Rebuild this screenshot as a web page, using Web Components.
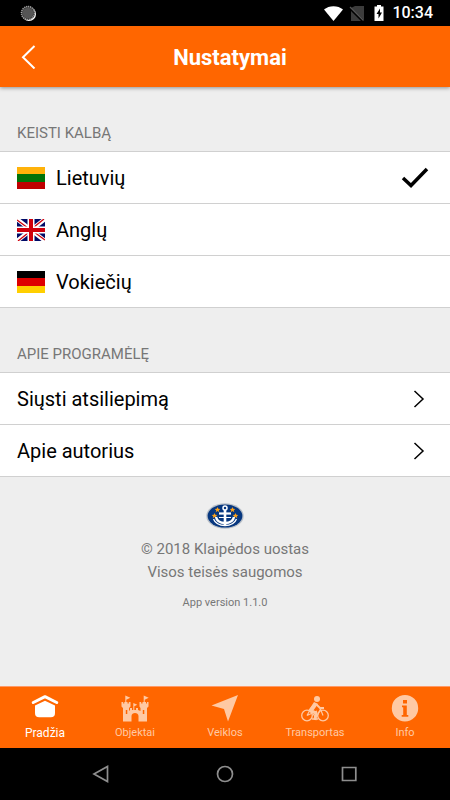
<!DOCTYPE html>
<html lang="lt">
<head>
<meta charset="utf-8">
<meta name="viewport" content="width=device-width, initial-scale=1">
<title>Nustatymai</title>
<style>
html, body { margin: 0; height: 100%; }
body { font-family: Roboto, "Noto Sans", sans-serif; color: #000; --brand: #ff6600; --ground: #eee; --line: #d0d0d0; }
</style>
</head>
<body>
<settings-screen></settings-screen>
<script>
const define = (name, html, init) => customElements.define(name, class extends HTMLElement {
  constructor() {
    super();
    const t = document.createElement('template');
    t.innerHTML = html;
    this.attachShadow({ mode: 'open' }).append(t.content.cloneNode(true));
  }
  connectedCallback() { if (init) init(this, this.shadowRoot); }
});

define('status-bar', `
<style>
:host { display: flex; align-items: center; height: 26px; padding: 0 17px 0 20px; background: #000; color: #fff; font-size: 16px; line-height: 28px; font-weight: 500; }
.right { margin-left: auto; display: flex; align-items: center; }
.time { margin-left: 6px; }
svg { display: block; }
</style>
<svg width="17" height="17" viewBox="0 0 17 17" aria-hidden="true">
  <circle cx="9" cy="9" r="7" fill="#fff"/><circle cx="8" cy="8" r="7" fill="#3a3a3a"/>
  <circle cx="8" cy="8" r="6.5" fill="none" stroke="#aaa" stroke-width="1.6" stroke-dasharray="1 1"/><circle cx="8" cy="8" r="5.3" fill="#555"/>
</svg>
<div class="right">
<svg width="62" height="18" viewBox="0 0 62 18" aria-hidden="true">
  <path d="M0 5.5C5 1 14 1 19 5.5L9.500 17Z" fill="#fff"/>
  <path d="M31 2h9v14l-13-12z M27 7l10 10h-10z" fill="#3c3c3c"/><path d="M26 3l13.500 13.500" stroke="#555" stroke-width="1.300"/>
  <path d="M53 1h4v1.500h2.500V17h-9V2.500H53z" fill="#fff"/><path d="M56 4.500l-3.500 5.500h2v4.500l3.500-6h-2z" fill="#000"/>
</svg>
<span class="time"><slot></slot></span>
</div>`);

define('app-header', `
<style>
:host { position: relative; z-index: 1; display: grid; grid-template-columns: 56px 1fr 46px; align-items: center; height: 61px; background: var(--brand); color: #fff; box-shadow: 0 1px 4px rgba(0,0,0,.4); }
h1 { margin: 0; padding-top: 2px; text-align: center; font-size: 22px; line-height: 28px; font-weight: 700; }
button { height: 61px; border: 0; padding: 0 0 0 21px; background: none; color: inherit; }
svg { display: block; }
</style>
<button type="button" aria-label="Atgal"><svg width="15" height="24" viewBox="0 0 15 24" fill="none" stroke="currentColor" stroke-width="2"><path d="M13.500 1L2 12.300L13.500 23.500"/></svg></button>
<h1><slot></slot></h1>`);

define('settings-section', `
<style>
:host { display: block; }
h2 { margin: 0; padding: 36px 17px 7px; font-size: 15px; line-height: 21px; font-weight: 400; color: #777; }
.list { background: #fff; border-top: 1px solid var(--line); }
</style>
<section><h2><slot name="title"></slot></h2><div class="list"><slot></slot></div></section>`);

define('flag-icon', `
<style>:host { display: block; width: 28px; height: 22px; } svg { display: block; }</style>
<svg width="28" height="22" viewBox="0 0 28 22" aria-hidden="true"></svg>`, (el, root) => {
  const stripes = (a, b, c) => `<path fill="${a}" d="M0 0h28v8H0z"/><path fill="${b}" d="M0 7h28v8H0z"/><path fill="${c}" d="M0 15h28v7H0z"/>`;
  root.querySelector('svg').innerHTML = {
    lt: stripes('#ffb20a', '#007308', '#bf0000'),
    de: stripes('#000', '#de0000', '#ffcf00'),
    gb: `<path fill="#000b67" d="M0 0h28v22H0z"/><path d="M0 0l28 22M28 0L0 22" stroke="#fff" stroke-width="4.200"/><path d="M0 1l11 8M28 21l-11-8M27 0L17 8M1 22l10-8" stroke="#d0000c" stroke-width="1.300"/><path d="M14 0v22M0 11h28" stroke="#fff" stroke-width="7"/><path d="M14 0v22M0 11h28" stroke="#d0000c" stroke-width="4"/>`
  }[el.getAttribute('country')];
});

define('language-picker', `
<style>
:host { display: block; }
label { display: flex; align-items: center; gap: 11px; box-sizing: border-box; height: 52px; padding: 0 21px 0 17px; border-bottom: 1px solid var(--line); font-size: 20px; line-height: 28px; }
input { appearance: none; width: 0; height: 0; margin: 0; order: 3; }
.check { display: none; margin-left: auto; order: 4; }
input:checked + .check { display: block; }
</style>
<label><flag-icon country="lt"></flag-icon>Lietuvių<input type="radio" name="lang" checked><svg class="check" width="28" height="22" viewBox="0 0 28 22" fill="none" stroke="#000" stroke-width="3.500" aria-hidden="true"><path d="M2 11L10 18.500L26 2"/></svg></label>
<label><flag-icon country="gb"></flag-icon>Anglų<input type="radio" name="lang"><svg class="check" width="28" height="22" viewBox="0 0 28 22" fill="none" stroke="#000" stroke-width="3.500" aria-hidden="true"><path d="M2 11L10 18.500L26 2"/></svg></label>
<label><flag-icon country="de"></flag-icon>Vokiečių<input type="radio" name="lang"><svg class="check" width="28" height="22" viewBox="0 0 28 22" fill="none" stroke="#000" stroke-width="3.500" aria-hidden="true"><path d="M2 11L10 18.500L26 2"/></svg></label>`);

define('link-row', `
<style>
:host { display: block; }
a { display: flex; align-items: center; justify-content: space-between; box-sizing: border-box; height: 52px; padding: 0 25px 0 17px; border-bottom: 1px solid var(--line); font-size: 20px; line-height: 28px; color: inherit; text-decoration: none; }
</style>
<a href="#"><span><slot></slot></span><svg width="12" height="20" viewBox="0 0 12 20" fill="none" stroke="#000" stroke-width="1.500" aria-hidden="true"><path d="M1.500 2L10 10L1.500 18"/></svg></a>`);

define('port-logo', `
<style>:host { display: block; } svg { display: block; }</style>
<svg width="38" height="26" viewBox="0 0 38 26" aria-hidden="true">
  <ellipse cx="19" cy="13" rx="18.700" ry="12.800" fill="#b9c0c8"/><ellipse cx="19" cy="13" rx="17.400" ry="11.500" fill="#07377f"/>
  <g fill="#f9a01b"><path id="s" d="M11.500 4l.8 1.800 2 .1-1.500 1.300.5 2-1.800-1.100-1.800 1.100.5-2L8.700 5.900l2-.1z"/><use href="#s" x="15"/><use href="#s" x="-3" y="6"/><use href="#s" x="18" y="6"/></g>
  <g fill="none" stroke="#fff"><circle cx="19" cy="5" r="2" stroke-width="1.500"/><path d="M19 7v15" stroke-width="2.600"/><path d="M13 10.500h12" stroke-width="2.200"/><path d="M13 14.500h12" stroke-width="1"/><path d="M10 14c1 5 5 6 9 6s8-1 9-6" stroke-width="2.400"/><path d="M7.500 16c2 5 7 6.500 11.500 6.500S28.500 21 30.500 16" stroke-width="1.300"/></g>
</svg>`);

define('app-credits', `
<style>
:host { display: flex; flex-direction: column; align-items: center; padding-top: 26px; color: #777; text-align: center; }
p { margin: 9px 0 0; font-size: 15px; line-height: 23px; }
small { margin-top: 11px; font-size: 11px; line-height: 16px; }
</style>
<port-logo></port-logo>
<p>© 2018 Klaipėdos uostas<br>Visos teisės saugomos</p>
<small>App version 1.1.0</small>`);

define('tab-item', `
<style>
:host { display: block; color: #ffc9a3; }
:host([active]) { color: #fff; }
button { display: flex; flex-direction: column; align-items: center; width: 100%; height: 61px; padding: 8px 0 0; border: 0; background: none; color: inherit; font: 400 11px/16px Roboto, "Noto Sans", sans-serif; }
:host([active]) button { font-size: 12px; }
svg { display: block; margin-bottom: 3px; }
</style>
<button type="button"><svg width="28" height="27" viewBox="0 0 28 27" fill="currentColor" aria-hidden="true"></svg><slot></slot></button>`, (el, root) => {
  root.querySelector('svg').innerHTML = {
    home: '<path d="M14 1.700L2.300 7.500M14 1.700L25.700 7.500" stroke="currentColor" stroke-width="3" stroke-linecap="round"/><path d="M14 5.800L4 10.600V18c0 3 1.400 4.300 4.200 4.300h11.600c2.800 0 4.200-1.300 4.200-4.300v-7.400z"/>',
    castle: '<path fill-rule="evenodd" d="M4.300 .500l5 2.200-4 2V7h1.200v1.500h1.300V7h1.700v4.500L8 13v3l1-1V13h2v2h1.300v-4.500V8l4 1.700-3 1.500V15H15v-2h2v2l2.500 1v-3L18.500 11.500V7h1.700v1.500h1.300V7h1.200V.500l5 2.200-4 2V7H25v1.500h1V7h1.500v4.500L26 13v13.500h-8.500V21c0-4-7-4-7 0v5.500H2V13L.500 11.500V7h1.700v1.500h1.100V7h1zM4.800 15v4h1.500v-4zM21.800 15v4h1.500v-4z"/>',
    arrow: '<path d="M27 0L.500 10.500L13 14L17 26.500z"/>',
    bike: '<circle cx="16" cy="4" r="3"/><g fill="none" stroke="currentColor"><circle cx="6" cy="20.500" r="5.300" stroke-width="1.300"/><circle cx="22" cy="20.500" r="5.300" stroke-width="1.300"/><path d="M6 20.500L9 15l5 6.500h2L19.500 14L22 20.500M6 20.500L16 16" stroke-width="1.200"/><path d="M15 9l4 4h4" stroke-width="1.800"/><path d="M13.500 10L9 15.500l6 2.500L14 25" stroke-width="3" stroke-linejoin="round"/><path d="M11 24h6" stroke-width="1.500"/></g><path d="M13 7l4 2-5 7-4-1z"/>',
    info: '<path fill-rule="evenodd" d="M14 0A13.200 13.200 0 1 0 14 26.400A13.200 13.200 0 1 0 14 0M12 5h4v3.500h-4zM11 10.500H15.800v9.500h1.500v1.800h-6.600V20H12.200v-7.700h-1.200z"/>'
  }[el.getAttribute('icon')];
});

define('tab-bar', `
<style>:host { display: grid; grid-template-columns: repeat(5, 1fr); background: var(--brand); border-top: 1px solid #ff9966; }</style>
<slot></slot>`);

define('system-nav', `
<style>
:host { display: flex; justify-content: center; gap: 100px; background: #000; color: #8e8e8e; }
button { width: 24px; height: 52px; padding: 0; border: 0; background: none; color: inherit; }
svg { display: block; margin: auto; }
</style>
<button type="button" aria-label="Atgal"><svg width="24" height="20" viewBox="0 0 24 20" fill="none" stroke="currentColor" stroke-width="1.700"><path d="M18.500 2.500v15L5 10z"/></svg></button>
<button type="button" aria-label="Pradžia"><svg width="24" height="20" viewBox="0 0 24 20" fill="none" stroke="currentColor" stroke-width="1.700"><circle cx="12" cy="10" r="7.500"/></svg></button>
<button type="button" aria-label="Programos"><svg width="24" height="20" viewBox="0 0 24 20" fill="none" stroke="currentColor" stroke-width="1.700"><path d="M5.500 3.500h13.300v13H5.500z"/></svg></button>`);

define('settings-screen', `
<style>
:host { display: flex; flex-direction: column; min-height: 100vh; background: var(--ground); }
main { flex: 1; }
</style>
<status-bar>10:34</status-bar>
<app-header>Nustatymai</app-header>
<main>
  <settings-section><span slot="title">KEISTI KALBĄ</span><language-picker></language-picker></settings-section>
  <settings-section><span slot="title">APIE PROGRAMĖLĘ</span><link-row>Siųsti atsiliepimą</link-row><link-row>Apie autorius</link-row></settings-section>
  <app-credits></app-credits>
</main>
<tab-bar>
  <tab-item icon="home" active>Pradžia</tab-item>
  <tab-item icon="castle">Objektai</tab-item>
  <tab-item icon="arrow">Veiklos</tab-item>
  <tab-item icon="bike">Transportas</tab-item>
  <tab-item icon="info">Info</tab-item>
</tab-bar>
<system-nav></system-nav>`);
</script>
</body>
</html>
